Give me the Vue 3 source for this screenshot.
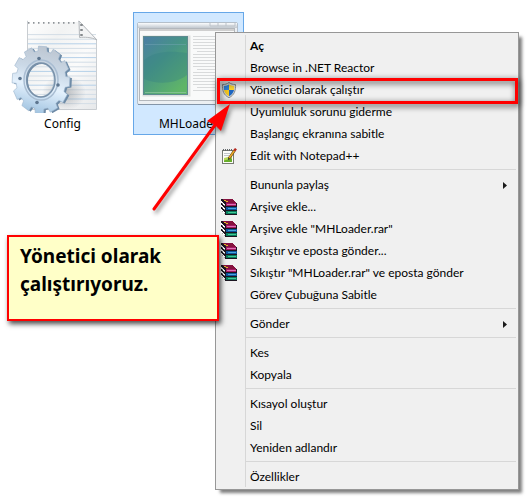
<template>
  <main class="desktop">
    <section class="files">
      <button class="file" type="button">
        <svg class="file-icon" viewBox="0 0 109 100" aria-hidden="true">
          <defs>
            <linearGradient id="paper" x1="0" y1="0" x2="1" y2="1">
              <stop offset="0" stop-color="#fff" />
              <stop offset="0.3" stop-color="#f2f3f3" />
              <stop offset="0.6" stop-color="#fbfbfb" />
              <stop offset="1" stop-color="#e6e8ea" />
            </linearGradient>
            <linearGradient id="steel" x1="0.6" y1="0" x2="0.4" y2="1">
              <stop offset="0" stop-color="#bcc5d0" />
              <stop offset="0.35" stop-color="#cbd9e7" />
              <stop offset="0.6" stop-color="#e4f1fd" />
              <stop offset="1" stop-color="#a0c3e0" />
            </linearGradient>
            <radialGradient id="shade">
              <stop offset="0" stop-color="#8b9096" stop-opacity="0.6" />
              <stop offset="1" stop-color="#8b9096" stop-opacity="0" />
            </radialGradient>
          </defs>
          <path d="M19.500 8H70.500L88.500 27V96.500H19.500Z" fill="url(#paper)" stroke="#c9cdd1" />
          <path v-for="n in 16" :key="n" :d="`M20 ${17 + n * 4.6}H88`" :stroke="n % 3 ? '#d3dde6' : '#b5d0e8'" stroke-width="1" />
          <path d="M20 9.500H70" stroke="#8e9398" stroke-width="2.500" stroke-dasharray="1.500 3.500" />
          <path d="M20 8H70" stroke="#fff" stroke-width="2" />
          <path d="M71 8L89 27C83 24 76 24 71.500 24.500Z" fill="#f3f4f5" stroke="#b4b8bc" />
          <path d="M73.500 11V24" stroke="#85898d" stroke-width="2.500" stroke-dasharray="2 3" />
          <ellipse cx="56" cy="80" rx="22" ry="18" fill="url(#shade)" />
          <path :d="gear" transform="translate(2 1)" fill="#6d8aa6" fill-rule="evenodd" />
          <path :d="gear" fill="url(#steel)" stroke="#9db6cd" stroke-width="0.600" fill-rule="evenodd" />
          <ellipse cx="33" cy="67" rx="17" ry="20" fill="none" stroke="#a9bdd2" stroke-width="1.500" />
          <ellipse cx="33" cy="67" rx="14" ry="17" fill="none" stroke="#7890a8" stroke-width="1.500" />
          <g fill="#5e7690">
            <circle cx="31" cy="45.500" r="1.800" />
            <circle cx="12" cy="65.500" r="1.800" />
            <circle cx="50" cy="72" r="1.800" />
            <circle cx="29" cy="89.500" r="1.800" />
          </g>
        </svg>
        <span>Config</span>
      </button>

      <button class="file selected" type="button">
        <svg class="file-icon" viewBox="0 0 109 100" aria-hidden="true">
          <defs>
            <linearGradient id="screen" x1="0" y1="0" x2="0.7" y2="1">
              <stop offset="0" stop-color="#4b7ea5" />
              <stop offset="0.45" stop-color="#479387" />
              <stop offset="1" stop-color="#5fb568" />
            </linearGradient>
            <linearGradient id="titlebar" x1="0" y1="0" x2="0" y2="1">
              <stop offset="0" stop-color="#fbfcfd" />
              <stop offset="1" stop-color="#c1c8cf" />
            </linearGradient>
          </defs>
          <rect x="3.500" y="9.500" width="100" height="82" rx="1.500" fill="#eceff2" stroke="#b4bfca" />
          <path d="M4 91.500H103" stroke="#8495a8" />
          <rect x="4" y="10" width="99" height="5" fill="url(#titlebar)" />
          <path d="M76 10V13H101V10M84 10V13M92 10V13" fill="none" stroke="#bcc3ca" />
          <rect x="5.500" y="15.500" width="95" height="72" fill="#f9fafa" stroke="#b3b7bc" />
          <path d="M6 17H100" stroke="#cfcfcf" stroke-width="2" />
          <rect x="8.500" y="22.500" width="48" height="61" fill="#dde0de" />
          <rect x="9.500" y="23.500" width="44" height="58" fill="url(#screen)" stroke="#5d8a90" />
          <path d="M10 47C22 37 39 38 53 40V62C40 72 22 71 10 66Z" fill="#337f84" opacity="0.35" />
          <path d="M11 79.500H52" stroke="#91c7a0" opacity="0.7" />
          <path d="M11 31.500H52" stroke="#7ca9bc" opacity="0.4" />
          <path v-for="n in 19" :key="n" :d="`M${n % 6 ? 59 : 63} ${20.5 + n * 3}H98`" stroke="#d8dadb" />
        </svg>
        <span>MHLoader</span>
      </button>
    </section>

    <nav class="menu" aria-label="MHLoader">
      <ul v-for="(group, g) in groups" :key="g">
        <li v-for="item in group" :key="item.label" :class="{ marked: item.marked }">
          <button type="button" :class="{ bold: item.bold }">
            <span class="icon">
              <svg v-if="item.icon === 'shield'" viewBox="0 0 16 16" aria-hidden="true">
                <path d="M8 0.500C10 2 12 2.500 14.500 2.500C14.800 8.500 13.500 13 8 15.700C2.500 13 1.200 8.500 1.500 2.500C4 2.500 6 2 8 0.500Z" fill="#d7dad9" stroke="#85898b" />
                <path d="M8 2.500V8H3C2.800 6.700 2.800 5 2.900 3.900C5 3.800 6.500 3.300 8 2.500Z" fill="#2d7fd5" />
                <path d="M8 2.500V8H13C13.200 6.700 13.200 5 13.100 3.900C11 3.800 9.500 3.300 8 2.500Z" fill="#f9d22c" />
                <path d="M8 8V14.300C5 12.700 3.500 10.500 3 8Z" fill="#f2c51d" />
                <path d="M8 8V14.300C11 12.700 12.500 10.500 13 8Z" fill="#1d65c0" />
              </svg>
              <svg v-else-if="item.icon === 'notepad'" viewBox="0 0 16 16" aria-hidden="true">
                <rect x="1.500" y="2.500" width="11" height="13" fill="#fdfdfa" stroke="#777b72" />
                <path d="M3 10L11 8V14H3Z" fill="#b6d957" />
                <path d="M3 12.500L11 10.500V14H3Z" fill="#67ae2b" />
                <path d="M3 5.500H9M3 7.500H8" stroke="#c2c8cb" />
                <path d="M2.500 1V4M4.500 1V4M6.500 1V4M8.500 1V4M10.500 1V4" stroke="#62676a" stroke-dasharray="2 1" />
                <path d="M8 10.500L13.500 2.500" stroke="#5b4313" stroke-width="2.600" />
                <path d="M8.200 10L13.500 2.500" stroke="#eda929" stroke-width="1.500" />
                <path d="M13.300 2.800L15 0.700" stroke="#b5261c" stroke-width="2.400" />
                <path d="M7 12L7.300 9.800L9 11Z" fill="#2e2a20" />
              </svg>
              <svg v-else-if="item.icon === 'books'" viewBox="0 0 16 16" shape-rendering="crispEdges" aria-hidden="true">
                <path d="M0 0H11L16 4V16H4L0 12Z" fill="#1b1520" />
                <path d="M1 0H11L15 4H5Z" fill="#86123f" />
                <path d="M5 4H15V7H5Z" fill="#a31863" />
                <path d="M6 5H15V6H6Z" fill="#dc74b1" />
                <path d="M3 1H5V2H7V3H5V2H3Z" fill="#dfbd26" />
                <path d="M5 8H16V11H5Z" fill="#0c559c" />
                <path d="M7 9H15V10H7Z" fill="#49a5dc" />
                <path d="M5 12H16V15H5Z" fill="#087c5d" />
                <path d="M7 13H15V14H7Z" fill="#43c896" />
                <path d="M0 2L4 6V8L0 4ZM0 6L4 10V12L0 8ZM0 10L4 14V16L0 12Z" fill="#fff" />
                <path d="M1 4H2V5H1ZM3 6H4V7H3ZM1 8H2V9H1ZM3 10H4V11H3ZM1 12H2V13H1ZM3 14H4V15H3Z" fill="#aaa" />
              </svg>
            </span>
            <span class="label">{{ item.label }}</span>
            <svg v-if="item.submenu" class="chevron" viewBox="0 0 4 7" aria-hidden="true">
              <path d="M0 0L4 3.500L0 7Z" fill="#1a1a1a" />
            </svg>
          </button>
        </li>
      </ul>
    </nav>

    <svg class="pointer" viewBox="0 0 90 120" aria-hidden="true">
      <path d="M9 114L70 30" stroke="#f00" stroke-width="3" stroke-linecap="round" />
      <path d="M85 9L76 36L70 30L62 26Z" fill="#f00" />
    </svg>

    <p class="note">Yönetici olarak<br />çalıştırıyoruz.</p>
  </main>
</template>

<script setup>
const groups = [
  [
    { label: 'Aç', bold: true },
    { label: 'Browse in .NET Reactor' },
    { label: 'Yönetici olarak çalıştır', icon: 'shield', marked: true },
    { label: 'Uyumluluk sorunu giderme' },
    { label: 'Başlangıç ekranına sabitle' },
    { label: 'Edit with Notepad++', icon: 'notepad' }
  ],
  [
    { label: 'Bununla paylaş', submenu: true },
    { label: 'Arşive ekle...', icon: 'books' },
    { label: 'Arşive ekle "MHLoader.rar"', icon: 'books' },
    { label: 'Sıkıştır ve eposta gönder...', icon: 'books' },
    { label: 'Sıkıştır "MHLoader.rar" ve eposta gönder', icon: 'books' },
    { label: 'Görev Çubuğuna Sabitle' }
  ],
  [{ label: 'Gönder', submenu: true }],
  [{ label: 'Kes' }, { label: 'Kopyala' }],
  [{ label: 'Kısayol oluştur' }, { label: 'Sil' }, { label: 'Yeniden adlandır' }],
  [{ label: 'Özellikler' }]
];

// 12 teeth around an ellipse, with the hub cut out
function gearPath(cx, cy, rx, ry, teeth) {
  const points = [];
  const step = (Math.PI * 2) / teeth;
  for (let i = 0; i < teeth; i++) {
    const profile = [[-0.36, 0.86], [-0.3, 1], [0.24, 1], [0.34, 0.86]];
    profile.forEach(([offset, r]) => {
      const a = (i + offset) * step - 1.5;
      points.push(`${(cx + Math.cos(a) * rx * r).toFixed(1)} ${(cy + Math.sin(a) * ry * r).toFixed(1)}`);
    });
  }
  return `M${points.join('L')}ZM${cx - 15} ${cy}a14 17 0 1 0 28 0a14 17 0 1 0 -28 0Z`;
}

const gear = gearPath(33, 67, 29, 34, 12);
</script>

<style>
body {
  margin: 0;
  background: #fff;
}
</style>

<style scoped>
.desktop {
  position: relative;
  min-height: 100vh;
  box-sizing: border-box;
  padding: 12px 7px;
  overflow: hidden;
  font-family: "Noto Sans", "Open Sans", sans-serif;
  font-size: 12px;
  color: #000;
}

button {
  font: inherit;
  color: inherit;
  background: none;
  border: 0;
  padding: 0;
}

.files {
  display: flex;
  gap: 15px;
}

.file {
  display: flex;
  flex-direction: column;
  align-items: center;
  width: 111px;
  border: 1px solid transparent;
  line-height: 20px;
}

.file span {
  padding-top: 1px;
}

.file.selected {
  background: #d1e8ff;
  border-color: #66a7e8;
}

.file-icon {
  width: 109px;
  height: 100px;
}

.menu {
  position: absolute;
  top: 32px;
  left: 215px;
  right: 10px;
  padding: 2px 2px 1px;
  background: #f0f0f0;
  border: 1px solid #979797;
  box-shadow: 4px 4px 3px -1px rgba(0, 0, 0, 0.5);
  font-family: Lato, "Noto Sans", sans-serif;
  font-variant-ligatures: none;
}

.menu::before {
  content: "";
  position: absolute;
  top: 2px;
  bottom: 2px;
  left: 29px;
  width: 1px;
  background: #d7d7d7;
}

ul {
  list-style: none;
  margin: 0;
  padding: 0;
}

ul + ul {
  padding-top: 7px;
  background: linear-gradient(#d7d7d7, #d7d7d7) 27px 2px / 100% 1px no-repeat;
}

li {
  position: relative;
}

li button {
  display: flex;
  align-items: center;
  width: 100%;
  height: 22px;
  padding: 0 9px 0 3px;
  text-align: left;
}

.bold {
  font-weight: 700;
}

.icon {
  width: 16px;
  height: 16px;
  margin-right: 13px;
}

.icon svg {
  display: block;
}

.label {
  flex: 1;
  line-height: 16px;
  white-space: nowrap;
}

.chevron {
  width: 4px;
  height: 7px;
}

.marked::after {
  content: "";
  position: absolute;
  inset: -1px -2px -3px -1px;
  border: 3px solid #f00;
  filter: drop-shadow(1px 2px 3px rgba(0, 0, 0, 0.8));
}

.pointer {
  position: absolute;
  top: 95px;
  left: 145px;
  width: 90px;
  height: 120px;
  filter: drop-shadow(2px 3px 2px rgba(0, 0, 0, 0.45));
}

.note {
  position: absolute;
  top: 235px;
  left: 7px;
  box-sizing: border-box;
  width: 212px;
  margin: 0;
  padding: 5px 11px 21px;
  background: #ffffc8;
  border: 2px solid #f00;
  box-shadow: 2px 3px 5px rgba(0, 0, 0, 0.7);
  font-size: 19px;
  font-weight: 700;
  line-height: 28px;
}
</style>
